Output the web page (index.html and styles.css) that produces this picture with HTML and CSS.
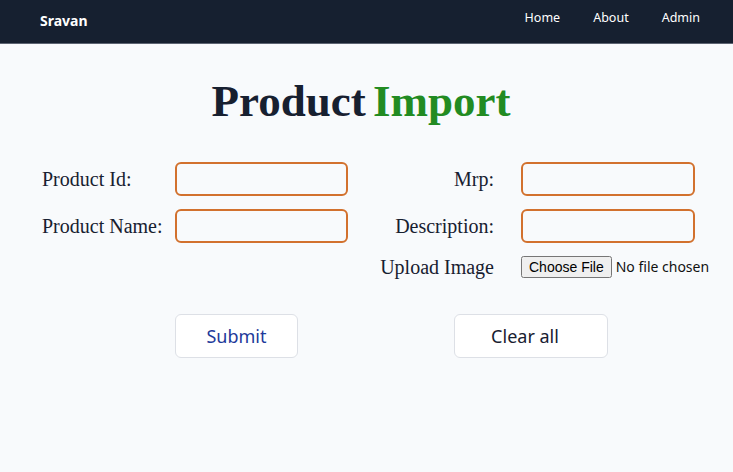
FILE: index.html
```html
<!DOCTYPE html>
<html>
<head>
<meta charset="utf-8">
<link rel="stylesheet" href="styles.css">
</head>
<body>
<nav class="nav">
  <div class="brand">Sravan</div>
  <div class="links">
    <a class="link">Home</a>
    <a class="link">About</a>
    <a class="link">Admin</a>
  </div>
</nav>
<main class="main">
  <h1 class="title"><span class="t-dark">Product</span> <span class="t-green">Import</span></h1>
  <form class="form">
    <label class="lbl">Product Id:</label>
    <input class="inp" type="text">
    <label class="lbl lbl-r">Mrp:</label>
    <input class="inp inp-r" type="text">
    <label class="lbl">Product Name:</label>
    <input class="inp" type="text">
    <label class="lbl lbl-r">Description:</label>
    <input class="inp inp-r" type="text">
    <span></span>
    <span></span>
    <label class="lbl lbl-r lbl-file">Upload Image</label>
    <input class="file" type="file">
  </form>
  <div class="actions">
    <button class="btn btn-submit" type="button">Submit</button>
    <button class="btn btn-clear" type="button">Clear all</button>
  </div>
</main>
</body>
</html>
```
FILE: styles.css
```css
* { box-sizing: border-box; }
html, body { margin: 0; padding: 0; }
body {
  background: #f8fafc;
  font-family: "Liberation Serif", serif;
  color: #172030;
  width: 733px;
  height: 472px;
  overflow: hidden;
}
.nav {
  height: 44px;
  background: #162030;
  border-bottom: 1px solid #5c6472;
  display: flex;
  justify-content: space-between;
  align-items: flex-start;
  padding: 0 33px 0 40px;
  font-family: "Noto Sans", sans-serif;
  color: #fff;
}
.brand {
  font-weight: 700;
  font-size: 14px;
  margin-top: 11px;
  line-height: 20px;
}
.links {
  display: flex;
  gap: 33px;
  margin-top: 9px;
}
.link {
  font-size: 12.5px;
  line-height: 18px;
  color: #fff;
}
.main {
  display: flex;
  flex-direction: column;
}
.title {
  margin: 30px 0 0 0;
  padding-right: 11px;
  text-align: center;
  font-size: 45px;
  line-height: 54px;
  font-weight: 700;
  word-spacing: -4px;
}
.t-dark { color: #172030; }
.t-green { color: #228b22; }
.form {
  margin-top: 34px;
  padding-left: 42px;
  display: grid;
  grid-template-columns: 133px 173px 146px 174px;
  row-gap: 13px;
  grid-template-rows: 34px 34px 23px;
}
.lbl {
  font-size: 20px;
  line-height: 34px;
  white-space: nowrap;
}
.lbl-r { text-align: right; }
.lbl-file { line-height: 23px; }
.inp {
  width: 173px;
  height: 34px;
  border: 2px solid #d2712e;
  border-radius: 6px;
  background: #f8fafc;
  outline: none;
}
.inp-r { margin-left: 27px; width: 174px; }
.file {
  margin-left: 27px;
  font-family: "Noto Sans", sans-serif;
  font-size: 14px;
  width: 200px;
  height: 23px;
  color: #111;
}
.actions {
  margin-top: 35px;
  display: flex;
  padding-left: 175px;
  gap: 156px;
}
.btn {
  height: 44px;
  background: #fff;
  border: 1px solid #dde0e6;
  border-radius: 6px;
  font-family: "Noto Sans", sans-serif;
  font-size: 18px;
}
.btn-submit { width: 123px; color: #1e3a9a; }
.btn-clear { width: 154px; color: #172030; padding-right: 18px; }
```
